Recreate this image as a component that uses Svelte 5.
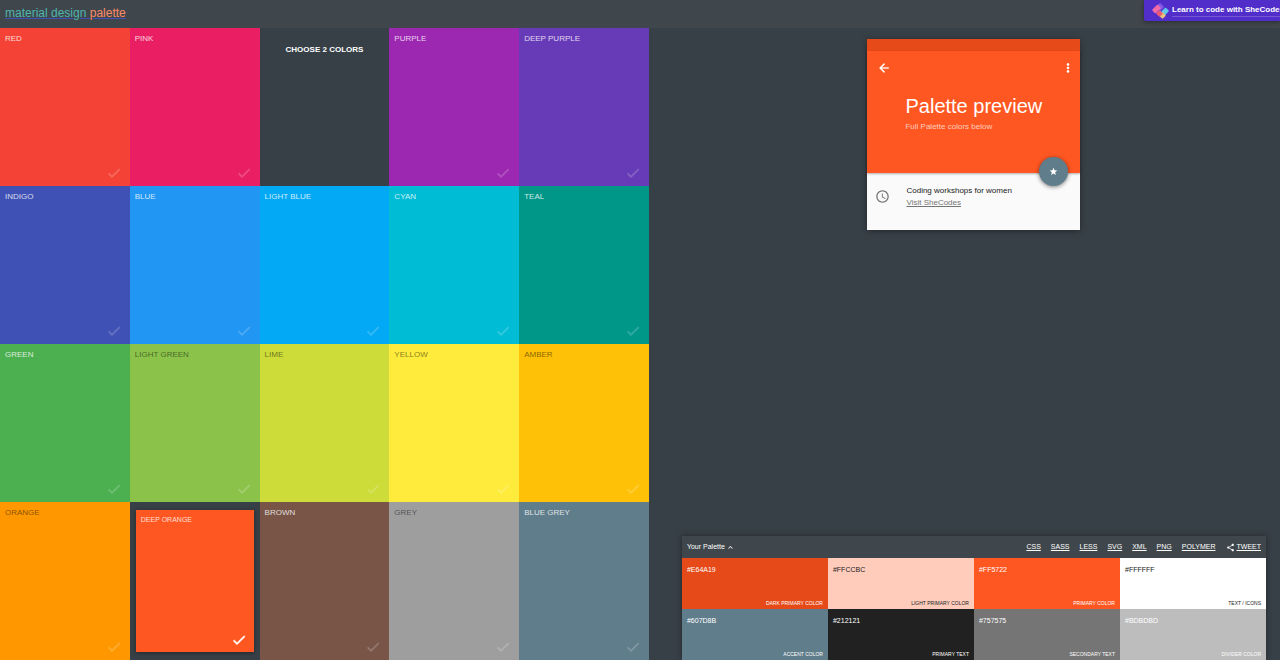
<script>
  const tiles = [
    { name: 'Red', color: '#f44336' },
    { name: 'Pink', color: '#e91e63' },
    { prompt: true },
    { name: 'Purple', color: '#9c27b0' },
    { name: 'Deep Purple', color: '#673ab7' },
    { name: 'Indigo', color: '#3f51b5' },
    { name: 'Blue', color: '#2196f3' },
    { name: 'Light Blue', color: '#03a9f4' },
    { name: 'Cyan', color: '#00bcd4' },
    { name: 'Teal', color: '#009688' },
    { name: 'Green', color: '#4caf50' },
    { name: 'Light Green', color: '#8bc34a', dark: true },
    { name: 'Lime', color: '#cddc39', dark: true },
    { name: 'Yellow', color: '#ffeb3b', dark: true },
    { name: 'Amber', color: '#ffc107', dark: true },
    { name: 'Orange', color: '#ff9800', dark: true },
    { name: 'Deep Orange', color: '#ff5722' },
    { name: 'Brown', color: '#795548' },
    { name: 'Grey', color: '#9e9e9e', dark: true },
    { name: 'Blue Grey', color: '#607d8b' }
  ];
  const formats = ['CSS', 'SASS', 'LESS', 'SVG', 'XML', 'PNG', 'POLYMER'];
  const palette = [
    { hex: '#E64A19', role: 'Dark primary color' },
    { hex: '#FFCCBC', role: 'Light primary color', dark: true },
    { hex: '#FF5722', role: 'Primary color' },
    { hex: '#FFFFFF', role: 'Text / Icons', dark: true },
    { hex: '#607D8B', role: 'Accent color' },
    { hex: '#212121', role: 'Primary text' },
    { hex: '#757575', role: 'Secondary text' },
    { hex: '#BDBDBD', role: 'Divider color' }
  ];
  let selected = $state('Deep Orange');
  let open = $state(true);
</script>

<div class="page">
  <header>
    <a class="brand" href="#top"><span>material design</span> <em>palette</em></a>
    <a class="banner" href="#shecodes">
      <svg viewBox="0 0 18 18" aria-hidden="true">
        <rect x="6" y="2" width="6" height="6" rx="1" fill="#8058e8" transform="rotate(45 9 5)" />
        <rect x="3" y="3" width="5" height="8" rx="1" fill="#f06aa8" transform="rotate(45 5.5 7)" />
        <rect x="11" y="6" width="5" height="8" rx="1" fill="#62c6ea" transform="rotate(45 13.5 10)" />
        <rect x="9" y="11" width="5" height="5" rx="1" fill="#e8c078" transform="rotate(45 11.5 13.5)" />
        <rect x="6" y="9" width="5" height="5" rx="1" fill="#ea5a74" transform="rotate(45 8.5 11.5)" />
      </svg>
      <span>Learn to code with SheCodes</span>
    </a>
  </header>

  <main>
    <section class="tiles" aria-label="Colors">
      {#each tiles as tile}
        {#if tile.prompt}
          <p class="prompt">CHOOSE 2 COLORS</p>
        {:else}
          <div class="cell" class:selected={selected === tile.name}>
            <button
              class:dark={tile.dark}
              style:background-color={tile.color}
              aria-pressed={selected === tile.name}
              onclick={() => (selected = tile.name)}
            >
              <span>{tile.name}</span>
              <svg viewBox="0 0 24 24" aria-hidden="true"><path d="M9 16.17L4.83 12l-1.42 1.41L9 19 21 7l-1.41-1.41z" /></svg>
            </button>
          </div>
        {/if}
      {/each}
    </section>

    <section class="side">
      <article class="card">
        <div class="status"></div>
        <div class="hero">
          <div class="bar">
            <button aria-label="Back"><svg viewBox="0 0 24 24"><path d="M20 11H7.83l5.59-5.59L12 4l-8 8 8 8 1.41-1.41L7.83 13H20v-2z" /></svg></button>
            <button aria-label="More"><svg viewBox="0 0 24 24"><path d="M12 8c1.1 0 2-.9 2-2s-.9-2-2-2-2 .9-2 2 .9 2 2 2zm0 2c-1.1 0-2 .9-2 2s.9 2 2 2 2-.9 2-2-.9-2-2-2zm0 6c-1.1 0-2 .9-2 2s.9 2 2 2 2-.9 2-2-.9-2-2-2z" /></svg></button>
          </div>
          <h1>Palette preview</h1>
          <p>Full Palette colors below</p>
          <button class="fab" aria-label="Favorite"><svg viewBox="0 0 24 24"><path d="M12 17.27L18.18 21l-1.64-7.03L22 9.24l-7.19-.61L12 2 9.19 8.63 2 9.24l5.46 4.73L5.82 21z" /></svg></button>
        </div>
        <div class="detail">
          <svg viewBox="0 0 24 24" aria-hidden="true"><path d="M11.99 2C6.47 2 2 6.48 2 12s4.47 10 9.99 10C17.52 22 22 17.52 22 12S17.52 2 11.99 2zM12 20c-4.42 0-8-3.58-8-8s3.58-8 8-8 8 3.58 8 8-3.58 8-8 8zm.5-13H11v6l5.25 3.15.75-1.23-4.5-2.67z" /></svg>
          <div>
            <p>Coding workshops for women</p>
            <a href="#visit">Visit SheCodes</a>
          </div>
        </div>
      </article>

      <section class="palette">
        <div class="toolbar">
          <button aria-expanded={open} onclick={() => (open = !open)}>
            Your Palette
            <svg viewBox="0 0 24 24" aria-hidden="true"><path d="M12 8l-6 6 1.41 1.41L12 10.83l4.59 4.58L18 14z" /></svg>
          </button>
          <nav>
            {#each formats as format}
              <a href="#{format}">{format}</a>
            {/each}
            <div class="share">
              <svg viewBox="0 0 24 24" aria-hidden="true"><path d="M18 16.08c-.76 0-1.44.3-1.96.77L8.91 12.7c.05-.23.09-.46.09-.7s-.04-.47-.09-.7l7.05-4.11c.54.5 1.25.81 2.04.81 1.66 0 3-1.34 3-3s-1.34-3-3-3-3 1.34-3 3c0 .24.04.47.09.7L8.04 9.81C7.5 9.31 6.79 9 6 9c-1.66 0-3 1.34-3 3s1.34 3 3 3c.79 0 1.5-.31 2.04-.81l7.12 4.16c-.05.21-.08.43-.08.65 0 1.61 1.31 2.92 2.92 2.92s2.92-1.31 2.92-2.92-1.31-2.92-2.92-2.92z" /></svg>
              <a href="#tweet">TWEET</a>
            </div>
          </nav>
        </div>
        {#if open}
          <div class="swatches">
            {#each palette as item}
              <div class="swatch" class:dark={item.dark} style:background-color={item.hex}>
                <span>{item.hex}</span>
                <small>{item.role}</small>
              </div>
            {/each}
          </div>
        {/if}
      </section>
    </section>
  </main>
</div>

<style>
  :global(body) {
    margin: 0;
    background: #384047;
    font-family: "Liberation Sans", Arial, sans-serif;
  }
  .page {
    display: flex;
    flex-direction: column;
    min-height: 100vh;
    overflow: hidden;
  }
  p, h1 { margin: 0; font-weight: 400; }
  button {
    border: 0;
    padding: 0;
    background: none;
    color: inherit;
    font: inherit;
    cursor: pointer;
  }
  svg { display: block; fill: currentColor; flex: none; }

  header {
    display: flex;
    justify-content: space-between;
    align-items: flex-start;
    height: 28px;
    background: #40474c;
  }
  .brand {
    padding: 6px 5px;
    font-size: 12px;
    line-height: 15px;
    color: #4db6ac;
    text-decoration: underline #3f51b5;
  }
  .brand em { font-style: normal; color: #ff8a65; }
  .banner {
    display: flex;
    align-items: center;
    gap: 3px;
    width: 129px;
    height: 21px;
    padding-left: 7px;
    overflow: hidden;
    border-bottom-left-radius: 2px;
    background: #512dca;
    box-shadow: 0 1px 4px rgba(0, 0, 0, 0.4);
    color: #fff;
    font-size: 8px;
    font-weight: 700;
    line-height: 12px;
    white-space: nowrap;
    text-decoration: none;
  }
  .banner svg { width: 18px; height: 18px; }
  .banner span { border-bottom: 1px solid #7457d6; }

  main { display: flex; flex: 1; }
  .tiles {
    display: grid;
    grid-template-columns: repeat(5, 1fr);
    grid-template-rows: repeat(4, 1fr);
    width: 50.7%;
  }
  .cell { display: flex; }
  .cell button {
    display: flex;
    flex: 1;
    flex-direction: column;
    align-items: flex-start;
    justify-content: space-between;
    padding: 6px 8px 5px 5px;
    color: rgba(255, 255, 255, 0.8);
    font-size: 8px;
    line-height: 10px;
    text-transform: uppercase;
  }
  .cell button.dark { color: rgba(0, 0, 0, 0.5); }
  .cell svg {
    width: 16px;
    height: 16px;
    align-self: flex-end;
    color: #fff;
    stroke: currentColor;
    stroke-width: 0.8;
    opacity: 0.2;
  }
  .cell.selected { padding: 8px 6px; }
  .cell.selected button {
    padding: 5px 7px 4px 5px;
    font-size: 7px;
    box-shadow: 0 1px 4px rgba(0, 0, 0, 0.4);
  }
  .cell.selected svg { opacity: 1; }
  .prompt {
    padding-top: 17px;
    color: #fff;
    font-size: 8px;
    font-weight: 700;
    line-height: 10px;
    text-align: center;
  }

  .side {
    display: flex;
    flex: 1;
    flex-direction: column;
    justify-content: space-between;
    align-items: center;
    padding: 11px 14px 0 33px;
  }
  .card {
    width: 213px;
    background: #fafafa;
    box-shadow: 0 1px 6px rgba(0, 0, 0, 0.4);
  }
  .status { height: 12px; background: #e64a19; }
  .hero {
    position: relative;
    padding: 9px 5px 41px;
    background: #ff5722;
    box-shadow: 0 1px 2px rgba(0, 0, 0, 0.3);
    color: #fff;
  }
  .bar { display: flex; justify-content: space-between; padding-left: 5px; }
  .bar svg {
    width: 14px;
    height: 16px;
    stroke: currentColor;
    stroke-width: 0.6;
  }
  .hero h1 {
    padding: 18px 0 0 33px;
    font-size: 20px;
    line-height: 24px;
  }
  .hero p {
    padding: 4px 0 0 33px;
    color: rgba(255, 255, 255, 0.7);
    font-size: 8px;
    line-height: 10px;
  }
  .fab {
    position: absolute;
    right: 12px;
    bottom: -13px;
    display: grid;
    place-items: center;
    width: 29px;
    height: 29px;
    border-radius: 50%;
    background: #607d8b;
    box-shadow: 0 1px 4px rgba(0, 0, 0, 0.5);
  }
  .fab svg { width: 9px; height: 9px; }
  .detail {
    display: flex;
    gap: 16px;
    padding: 12px 8px 21px;
    color: #212121;
    font-size: 8px;
    line-height: 12px;
  }
  .detail svg { width: 15px; height: 15px; margin-top: 4px; color: #757575; }
  .detail a { display: block; color: #757575; }

  .palette {
    width: 100%;
    box-shadow: 0 0 6px rgba(0, 0, 0, 0.4);
    color: #fff;
    font-size: 7px;
    line-height: 10px;
  }
  .toolbar {
    display: flex;
    justify-content: space-between;
    align-items: center;
    height: 22px;
    padding: 0 5px;
    background: #40474c;
  }
  .toolbar button { display: flex; align-items: center; gap: 1px; }
  .toolbar svg { width: 9px; height: 9px; }
  nav { display: flex; gap: 10px; }
  nav a { color: #fff; }
  .share { display: flex; align-items: center; gap: 2px; }
  .swatches { display: grid; grid-template-columns: repeat(4, 1fr); }
  .swatch {
    display: flex;
    flex-direction: column;
    justify-content: space-between;
    height: 43px;
    padding: 7px 5px 1px;
  }
  .swatch.dark { color: #212121; }
  .swatch small {
    align-self: flex-end;
    font-size: 5px;
    line-height: 9px;
    text-transform: uppercase;
  }
</style>
